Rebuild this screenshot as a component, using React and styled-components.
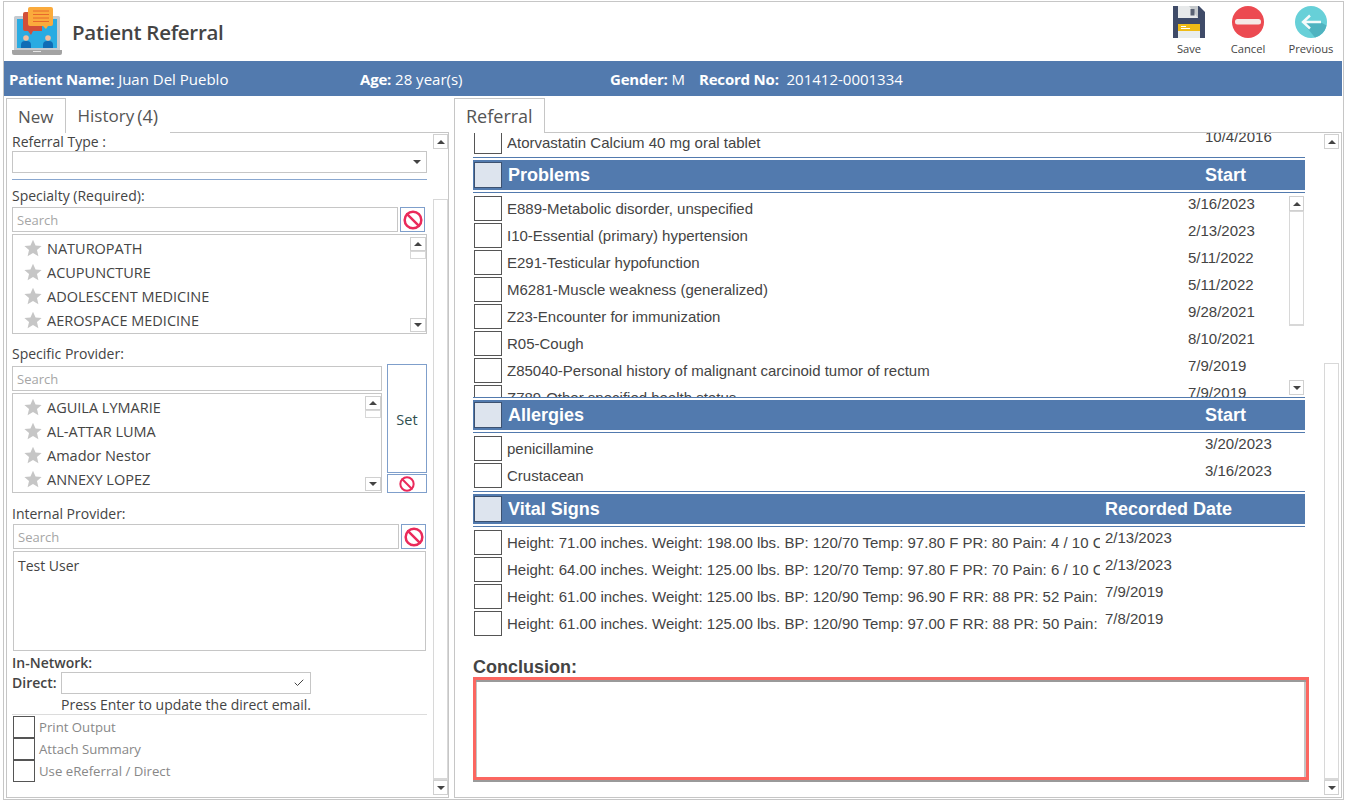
import React from "react";
import styled, { createGlobalStyle } from "styled-components";
import { Ban, Check } from "lucide-react";

const BLUE = "#527aae";
const LINE = "#c6c6c6";
const UI_FONT = `"Open Sans", "Noto Sans", sans-serif`;
const FORM_FONT = `"Liberation Sans", Arial, sans-serif`;

const problems = [
  ["E889-Metabolic disorder, unspecified", "3/16/2023"],
  ["I10-Essential (primary) hypertension", "2/13/2023"],
  ["E291-Testicular hypofunction", "5/11/2022"],
  ["M6281-Muscle weakness (generalized)", "5/11/2022"],
  ["Z23-Encounter for immunization", "9/28/2021"],
  ["R05-Cough", "8/10/2021"],
  ["Z85040-Personal history of malignant carcinoid tumor of rectum", "7/9/2019"],
  ["Z789-Other specified health status", "7/9/2019"],
];
const allergies = [
  ["penicillamine", "3/20/2023"],
  ["Crustacean", "3/16/2023"],
];
const vitals = [
  ["Height: 71.00 inches. Weight: 198.00 lbs. BP: 120/70 Temp: 97.80 F PR: 80 Pain: 4 / 10 C", "2/13/2023"],
  ["Height: 64.00 inches. Weight: 125.00 lbs. BP: 120/70 Temp: 97.80 F PR: 70 Pain: 6 / 10 C", "2/13/2023"],
  ["Height: 61.00 inches. Weight: 125.00 lbs. BP: 120/90 Temp: 96.90 F RR: 88 PR: 52 Pain:", "7/9/2019"],
  ["Height: 61.00 inches. Weight: 125.00 lbs. BP: 120/90 Temp: 97.00 F RR: 88 PR: 50 Pain:", "7/8/2019"],
];

const GlobalStyle = createGlobalStyle`
  html, body {
    margin: 0;
    background: #fff;
    overflow: hidden;
  }
  * {
    box-sizing: border-box;
  }
`;

const Window = styled.div`
  width: 1341px;
  height: 799px;
  margin: 1px 0 0 3px;
  border: 1px solid ${LINE};
  display: flex;
  flex-direction: column;
  font-family: ${UI_FONT};
  color: #444;
  background: #fff;
`;

const Header = styled.header`
  height: 59px;
  flex: none;
  display: flex;
  align-items: center;
  padding: 0 0 0 8px;
`;

const Title = styled.h1`
  margin: 0 0 0 10px;
  font-size: 20.5px;
  font-weight: 600;
  letter-spacing: -0.28px;
  color: #444;
  flex: 1;
`;

const Action = styled.div`
  width: ${p => p.$width}px;
  display: flex;
  flex-direction: column;
  align-items: center;
  font-size: 11.2px;
  line-height: 16px;
  color: #444;
  svg {
    display: block;
    margin-bottom: 3px;
  }
`;

const PatientBar = styled.div`
  height: 35px;
  flex: none;
  display: flex;
  align-items: center;
  background: ${BLUE};
  color: #fff;
  font-size: 15px;
  padding: 1px 0 0 5px;
  margin-right: 1px;
`;

const PatientField = styled.div`
  width: ${p => (p.$width ? `${p.$width}px` : "auto")};
  white-space: nowrap;
  b {
    font-weight: 700;
    letter-spacing: -0.2px;
  }
`;

const Body = styled.div`
  flex: 1;
  min-height: 0;
  display: flex;
  gap: 5px;
  padding: 2px 1px 1px 2px;
`;

const Pane = styled.section`
  width: ${p => (p.$width ? `${p.$width}px` : "auto")};
  flex: ${p => (p.$width ? "none" : "1")};
  display: flex;
  flex-direction: column;
  min-width: 0;
`;

const TabRow = styled.div`
  height: 35px;
  flex: none;
  display: flex;
  align-items: flex-end;
  margin-bottom: -1px;
`;

const Tab = styled.div`
  height: ${p => (p.$active ? "35px" : "34px")};
  padding: 0 11px ${p => (p.$active ? 0 : 2)}px;
  display: flex;
  align-items: center;
  gap: 3px;
  font-size: ${p => p.$size || 17}px;
  color: #555;
  background: #fff;
  position: relative;
  border: 1px solid ${p => (p.$active ? LINE : "transparent")};
  border-bottom: 0;
  z-index: 1;
  span {
    font-size: 18px;
  }
`;

const PaneBox = styled.div`
  flex: 1;
  min-height: 0;
  display: flex;
  border: 1px solid ${LINE};
`;

const FormColumn = styled.div`
  flex: 1;
  min-width: 0;
  overflow: hidden;
  padding: 0 6px 0 5px;
`;

const Scrollbar = styled.div`
  width: ${p => p.$width || 15}px;
  flex: none;
  display: flex;
  flex-direction: column;
  margin: ${p => p.$margin || "0"};
`;

const ScrollButton = styled.div`
  height: ${p => p.$height || 15}px;
  flex: none;
  border: 1px solid #d0d0d0;
  display: flex;
  align-items: center;
  justify-content: center;
  background: #fff;
  &::before {
    content: "";
    border-left: 4px solid transparent;
    border-right: 4px solid transparent;
    ${p => (p.$down ? "border-top" : "border-bottom")}: 4px solid #444;
  }
`;

const ScrollGap = styled.div`
  flex: ${p => (p.$grow ? "1" : "none")};
  height: ${p => (p.$height ? `${p.$height}px` : "auto")};
`;

const ScrollThumb = styled.div`
  flex: ${p => (p.$height ? "none" : "1")};
  height: ${p => (p.$height ? `${p.$height}px` : "auto")};
  border: 1px solid #d8d8d8;
  border-bottom-width: ${p => (p.$flat ? "1px" : "2px")};
`;

const Label = styled.div`
  font-size: 14px;
  line-height: 18px;
  color: #444;
  font-weight: ${p => (p.$bold ? 600 : 400)};
  margin-top: ${p => p.$top || 0}px;
`;

const Select = styled.div`
  height: 22px;
  border: 1px solid ${LINE};
  display: flex;
  align-items: center;
  justify-content: flex-end;
  padding-right: 5px;
  &::after {
    content: "";
    border-left: 4px solid transparent;
    border-right: 4px solid transparent;
    border-top: 4px solid #444;
  }
`;

const Rule = styled.div`
  height: 1px;
  background: ${p => p.$color};
  margin: ${p => p.$margin};
`;

const SearchRow = styled.div`
  display: flex;
  gap: 2px;
  margin: ${p => p.$margin || "0"};
  padding-right: ${p => p.$right || 0}px;
`;

const SearchBox = styled.div`
  flex: 1;
  height: 25px;
  border: 1px solid ${LINE};
  color: #a6a6a6;
  font-size: 13px;
  line-height: 25px;
  padding-left: 4px;
`;

const ClearButton = styled.div`
  width: ${p => p.$width || 25}px;
  height: ${p => p.$height || 25}px;
  flex: none;
  border: 1px solid #7f9fcb;
  display: flex;
  align-items: center;
  justify-content: center;
  color: #ea2a5b;
`;

const ListBox = styled.div`
  height: ${p => p.$height || 100}px;
  margin-top: 2px;
  border: 1px solid ${LINE};
  display: flex;
  overflow: hidden;
`;

const ListItems = styled.div`
  flex: 1;
  min-width: 0;
  padding: 1px 0 0 11px;
`;

const ListItem = styled.div`
  height: 24px;
  display: flex;
  align-items: center;
  gap: 5px;
  font-size: 14.5px;
  color: #444;
  white-space: nowrap;
`;

const ProviderGrid = styled.div`
  display: grid;
  grid-template-columns: 370px 40px;
  column-gap: 5px;
  margin-top: 1px;
`;

const ProviderColumn = styled.div`
  padding-top: 2px;
`;

const SetColumn = styled.div`
  display: flex;
  flex-direction: column;
  gap: 1px;
`;

const SetButton = styled.div`
  height: 109px;
  padding-top: 2px;
  border: 1px solid #7f9fcb;
  display: flex;
  align-items: center;
  justify-content: center;
  font-size: 14.5px;
  color: #2f4f4f;
`;

const NoteBox = styled.div`
  height: 100px;
  margin: 2px 1px 0;
  border: 1px solid ${LINE};
  padding: 4px;
  font-size: 14px;
  line-height: 19px;
`;

const DirectRow = styled.div`
  display: flex;
  align-items: center;
  gap: 4px;
  height: 22px;
`;

const DirectInput = styled.div`
  width: 250px;
  height: 22px;
  border: 1px solid ${LINE};
  display: flex;
  align-items: center;
  justify-content: flex-end;
  padding-right: 5px;
  color: #444;
`;

const Hint = styled.div`
  font-size: 14px;
  height: 20px;
  line-height: 22px;
  padding-left: 49px;
  white-space: nowrap;
`;

const CheckRow = styled.div`
  height: 22px;
  display: flex;
  align-items: center;
  gap: 4px;
  padding-left: 1px;
  font-size: 13.2px;
  color: #888;
`;

const SmallBox = styled.div`
  width: 22px;
  height: 22px;
  flex: none;
  border: 1px solid #555;
`;

const ChartColumn = styled.div`
  flex: 1;
  min-width: 0;
  overflow: hidden;
  padding-left: 18px;
  font-family: ${FORM_FONT};
`;

const ChartInner = styled.div`
  width: 832px;
`;

const Row = styled.div`
  height: 27px;
  display: grid;
  grid-template-columns: 29px minmax(0, 1fr) ${p => p.$date}px;
  column-gap: 5px;
  align-items: start;
  font-size: 15px;
  color: #444;
  overflow: hidden;
`;

// first row is scrolled partly out of view, so it hangs from its bottom edge
const ClippedRow = styled(Row)`
  height: 22px;
  padding-bottom: 1px;
  grid-template-rows: 21px;
  align-items: end;
`;

const RowBox = styled.div`
  width: 28px;
  height: 25px;
  margin-left: 1px;
  border: 1px solid #555;
  background: #fff;
`;

const RowText = styled.div`
  white-space: nowrap;
  overflow: hidden;
  line-height: 17px;
  padding-top: 4px;
`;

const ClippedText = styled(RowText)`
  padding: 0 0 3px;
`;

const RowDate = styled.div`
  line-height: 16px;
  white-space: nowrap;
`;

const ClippedDate = styled(RowDate)`
  padding-bottom: 9px;
`;

const SectionHead = styled.div`
  height: 36px;
  margin-top: ${p => p.$top || 0}px;
  border-top: 1px solid ${BLUE};
  border-bottom: 1px solid ${BLUE};
  padding: 2px 0;
  background-clip: content-box;
  background-color: ${BLUE};
  display: grid;
  grid-template-columns: 30px minmax(0, 1fr) ${p => p.$date}px;
  column-gap: 5px;
  align-items: center;
  color: #fff;
  font-size: 18px;
  font-weight: 700;
`;

const HeadBox = styled.div`
  width: 28px;
  height: 26px;
  margin-left: 1px;
  border: 1px solid #3c5170;
  background: #dde4ee;
`;

const RowList = styled.div`
  padding-top: 3px;
`;

const ProblemsWrap = styled.div`
  height: 204px;
  display: flex;
  overflow: hidden;
`;

const ProblemRows = styled.div`
  flex: 1;
  min-width: 0;
  padding-top: 3px;
`;

const ConclusionLabel = styled.div`
  font-size: 18px;
  font-weight: 700;
  line-height: 18px;
  margin-top: 20px;
`;

const Conclusion = styled.div`
  width: 836px;
  height: 103px;
  margin-top: 1px;
  border: 3px solid #fb6660;
  box-shadow: inset 0 2px 0 #9a9a9a, inset 1px 0 0 #c4c4c4, inset -2px 0 0 #c4c4c4, 0 2px 0 #9a9a9a;
  background: #fff;
`;

const LogoIcon = () => (
  <svg width="50" height="49" viewBox="0 0 50 49">
    <rect x="2" y="9" width="46" height="35" rx="1.500" fill="#c4cad0" />
    <rect x="5" y="12" width="40" height="29" fill="#29abe2" />
    <path d="M0 43h50v3a2 2 0 0 1-2 2H2a2 2 0 0 1-2-2z" fill="#a3a3a3" />
    <rect x="21" y="44" width="8" height="1" fill="#e6e6e6" />
    <path d="M11 7a2 2 0 0 1 2-2h17v19H21l-2 4-3-4h-3a2 2 0 0 1-2-2z" fill="#d24f38" />
    <path d="M16 2a2 2 0 0 1 2-2h21a2 2 0 0 1 2 2v15a2 2 0 0 1-2 2h-3l-2 3-3-3H18a2 2 0 0 1-2-2z" fill="#fbab3c" />
    <path d="M21 4h16M21 7.500h16M21 11h16M21 14.500h16" stroke="#e8692c" strokeWidth="1" />
    <circle cx="14" cy="31" r="2.800" fill="#f4bd9c" />
    <path d="M9 41v-3a4 4 0 0 1 4-4h2a4 4 0 0 1 4 4v3z" fill="#0f6cb5" />
    <circle cx="36" cy="31" r="2.800" fill="#f4bd9c" />
    <path d="M31 41v-3a4 4 0 0 1 4-4h2a4 4 0 0 1 4 4v3z" fill="#0f6cb5" />
  </svg>
);

const SaveIcon = () => (
  <svg width="32" height="32" viewBox="0 0 32 32">
    <path d="M0 0h26l6 6v26H0z" fill="#3f4b68" />
    <path d="M5 0h20v12H5z" fill="#e7e9ea" />
    <path d="M16 0h9v12z" fill="#c5c9cc" />
    <rect x="17.500" y="3" width="4" height="6.500" fill="#5a6274" />
    <rect x="5" y="18" width="22" height="14" fill="#e9eded" />
    <rect x="5" y="18" width="22" height="7" fill="#efbb15" />
    <path d="M8 20.500h5M8 22.500h9" stroke="#fff" strokeWidth="1" />
  </svg>
);

const CancelIcon = () => (
  <svg width="32" height="32" viewBox="0 0 32 32">
    <circle cx="16" cy="16" r="16" fill="#ec4a51" />
    <rect x="3" y="13" width="26" height="5.500" rx="2.500" fill="#f5e8e6" />
  </svg>
);

const PreviousIcon = () => (
  <svg width="32" height="32" viewBox="0 0 32 32">
    <circle cx="16" cy="16" r="16" fill="#67d0d8" />
    <path d="M8 17l12 14.500a16 16 0 0 0 11.500-12L27 17H12z" fill="#4fb3c0" />
    <path d="M26 16H9M15 9.500l-7 6.500 7 6.500" fill="none" stroke="#f4fbfb" strokeWidth="2.400" />
  </svg>
);

const StarIcon = () => (
  <svg width="18" height="18" viewBox="0 0 24 24">
    <polygon points="12,1 15.400,8.600 23.500,9.300 17.300,14.700 19.200,23 12,18.600 4.800,23 6.700,14.700 0.500,9.300 8.600,8.600" fill="#c6c6c6" />
  </svg>
);

function DataRow({ item, date }) {
  return (
    <Row $date={date}>
      <RowBox />
      <RowText>{item[0]}</RowText>
      <RowDate>{item[1]}</RowDate>
    </Row>
  );
}

function ListScroll({ thumb }) {
  return (
    <Scrollbar $margin="2px 0 1px 0" $width={16}>
      <ScrollButton $height={14} />
      <ScrollThumb $height={thumb} $flat />
      <ScrollGap $grow />
      <ScrollButton $down $height={14} />
    </Scrollbar>
  );
}

function StarList({ items, thumb }) {
  return (
    <ListBox>
      <ListItems>
        {items.map(name => (
          <ListItem key={name}>
            <StarIcon />
            {name}
          </ListItem>
        ))}
      </ListItems>
      <ListScroll thumb={thumb} />
    </ListBox>
  );
}

function App() {
  return (
    <>
      <GlobalStyle />
      <Window>
        <Header>
          <LogoIcon />
          <Title>Patient Referral</Title>
          <Action $width={56}>
            <SaveIcon />
            Save
          </Action>
          <Action $width={62}>
            <CancelIcon />
            Cancel
          </Action>
          <Action $width={64}>
            <PreviousIcon />
            Previous
          </Action>
        </Header>
        <PatientBar>
          <PatientField $width={351}>
            <b>Patient Name:</b> Juan Del Pueblo
          </PatientField>
          <PatientField $width={250}>
            <b>Age:</b> 28 year(s)
          </PatientField>
          <PatientField $width={89}>
            <b>Gender:</b> M
          </PatientField>
          <PatientField>
            <b>Record No:</b>&nbsp; 201412-0001334
          </PatientField>
        </PatientBar>
        <Body>
          <Pane $width={443}>
            <TabRow>
              <Tab $active>New</Tab>
              <Tab>
                History <span>(4)</span>
              </Tab>
            </TabRow>
            <PaneBox>
              <FormColumn>
                <Label>Referral Type :</Label>
                <Select />
                <Rule $color="#8aa8d0" $margin="6px 0 7px" />
                <Label>Specialty (Required):</Label>
                <SearchRow $margin="2px 0 0" $right={2}>
                  <SearchBox>Search</SearchBox>
                  <ClearButton>
                    <Ban size={20} strokeWidth={3} />
                  </ClearButton>
                </SearchRow>
                <StarList
                  items={["NATUROPATH", "ACUPUNCTURE", "ADOLESCENT MEDICINE", "AEROSPACE MEDICINE"]}
                  thumb={8}
                />
                <Label $top={11}>Specific Provider:</Label>
                <ProviderGrid>
                  <ProviderColumn>
                    <SearchBox>Search</SearchBox>
                    <StarList
                      items={["AGUILA LYMARIE", "AL-ATTAR LUMA", "Amador Nestor", "ANNEXY LOPEZ"]}
                      thumb={8}
                    />
                  </ProviderColumn>
                  <SetColumn>
                    <SetButton>Set</SetButton>
                    <ClearButton $width={40} $height={19}>
                      <Ban size={16} strokeWidth={3} />
                    </ClearButton>
                  </SetColumn>
                </ProviderGrid>
                <Label $top={12}>Internal Provider:</Label>
                <SearchRow $margin="1px 1px 0">
                  <SearchBox>Search</SearchBox>
                  <ClearButton>
                    <Ban size={20} strokeWidth={3} />
                  </ClearButton>
                </SearchRow>
                <NoteBox>Test User</NoteBox>
                <Label $bold $top={3}>In-Network:</Label>
                <DirectRow>
                  <Label $bold>Direct:</Label>
                  <DirectInput>
                    <Check size={12} strokeWidth={2} />
                  </DirectInput>
                </DirectRow>
                <Hint>Press Enter to update the direct email.</Hint>
                <Rule $color="#dcdcdc" $margin="0 0 1px" />
                <CheckRow>
                  <SmallBox />
                  Print Output
                </CheckRow>
                <CheckRow>
                  <SmallBox />
                  Attach Summary
                </CheckRow>
                <CheckRow>
                  <SmallBox />
                  Use eReferral / Direct
                </CheckRow>
              </FormColumn>
              <Scrollbar $margin="1px 0 2px 0">
                <ScrollButton />
                <ScrollGap $height={50} />
                <ScrollThumb />
                <ScrollButton $down />
              </Scrollbar>
            </PaneBox>
          </Pane>
          <Pane>
            <TabRow>
              <Tab $active $size={18}>Referral</Tab>
            </TabRow>
            <PaneBox>
              <ChartColumn>
                <ChartInner>
                  <ClippedRow $date={100}>
                    <RowBox />
                    <ClippedText>Atorvastatin Calcium 40 mg oral tablet</ClippedText>
                    <ClippedDate>10/4/2016</ClippedDate>
                  </ClippedRow>
                  <SectionHead $date={100} $top={2}>
                    <HeadBox />
                    <span>Problems</span>
                    <span>Start</span>
                  </SectionHead>
                  <ProblemsWrap>
                    <ProblemRows>
                      {problems.map(item => (
                        <DataRow key={item[0]} item={item} date={101} />
                      ))}
                    </ProblemRows>
                    <Scrollbar $margin="3px 1px 2px 0">
                      <ScrollButton />
                      <ScrollThumb $height={115} />
                      <ScrollGap $grow />
                      <ScrollButton $down />
                    </Scrollbar>
                  </ProblemsWrap>
                  <SectionHead $date={100}>
                    <HeadBox />
                    <span>Allergies</span>
                    <span>Start</span>
                  </SectionHead>
                  <RowList>
                    {allergies.map(item => (
                      <DataRow key={item[0]} item={item} date={100} />
                    ))}
                  </RowList>
                  <SectionHead $date={200} $top={1}>
                    <HeadBox />
                    <span>Vital Signs</span>
                    <span>Recorded Date</span>
                  </SectionHead>
                  <RowList>
                    {vitals.map(item => (
                      <DataRow key={item[1] + item[0]} item={item} date={200} />
                    ))}
                  </RowList>
                  <ConclusionLabel>Conclusion:</ConclusionLabel>
                  <Conclusion />
                </ChartInner>
              </ChartColumn>
              <Scrollbar $margin="1px 2px 2px 0">
                <ScrollButton />
                <ScrollGap $height={214} />
                <ScrollThumb />
                <ScrollButton $down />
              </Scrollbar>
            </PaneBox>
          </Pane>
        </Body>
      </Window>
    </>
  );
}

export default App;
